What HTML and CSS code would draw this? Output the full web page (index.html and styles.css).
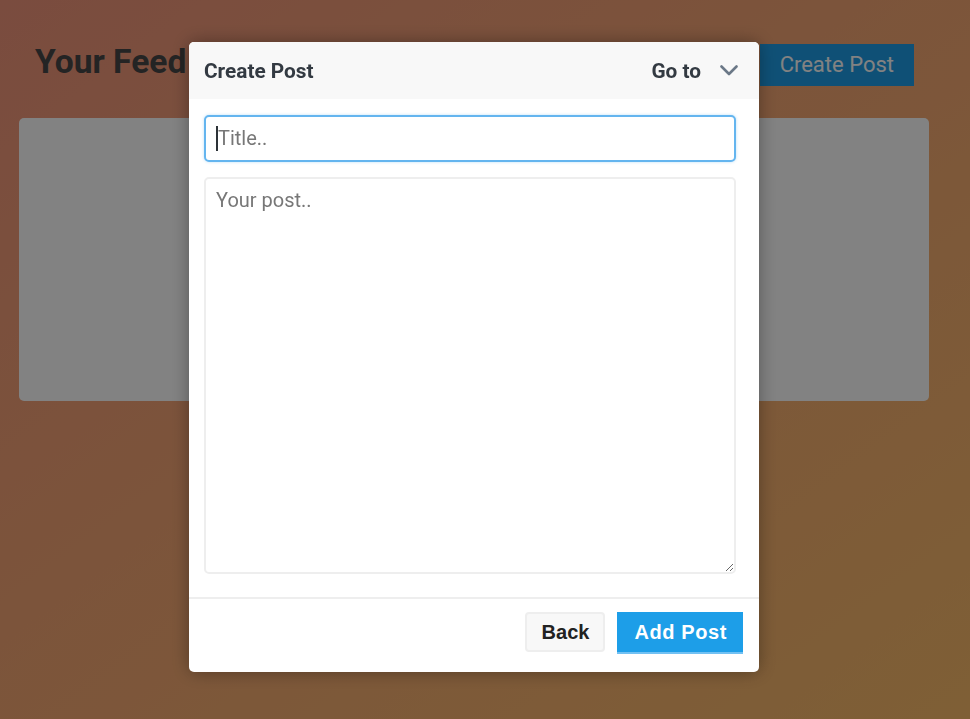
FILE: index.html
```html
<!DOCTYPE html>
<html lang="en">
<head>
<meta charset="utf-8">
<title>Your Feed</title>
<link rel="stylesheet" href="styles.css">
</head>
<body>
<div class="page">
  <header class="feed-header">
    <h1 class="feed-title">Your Feed</h1>
    <button class="create-btn">Create Post</button>
  </header>
  <section class="feed-card"></section>
</div>

<div class="overlay">
  <div class="modal">
    <div class="modal-header">
      <span class="modal-title">Create Post</span>
      <div class="goto">
        <span>Go to</span>
        <svg class="chevron" width="18" height="11" viewBox="0 0 18 11"><path d="M1.5 1.5 L9 9 L16.5 1.5" fill="none" stroke="#6b7887" stroke-width="2.6" stroke-linecap="round" stroke-linejoin="round"/></svg>
      </div>
    </div>
    <div class="modal-body">
      <div class="title-field">
        <input class="title-input" type="text" placeholder="Title.." autofocus>
      </div>
      <textarea class="post-input" placeholder="Your post.."></textarea>
    </div>
    <div class="modal-footer">
      <button class="btn-back">Back</button>
      <button class="btn-add">Add Post</button>
    </div>
  </div>
</div>
</body>
</html>
```
FILE: styles.css
```css
* { box-sizing: border-box; }
html, body { height: 100%; }
body {
  margin: 0;
  font-family: Roboto, "Liberation Sans", sans-serif;
  background: linear-gradient(to bottom right, #f0957c, #f9bb6a);
  min-height: 719px;
}
.page {
  padding: 44px 41px 0 19px;
}
.feed-header {
  display: flex;
  justify-content: space-between;
  align-items: flex-start;
  padding: 0 15px 0 16px;
}
.feed-title {
  margin: -1px 0 0;
  font-size: 33.6px;
  line-height: 38px;
  font-weight: 700;
  color: #484848;
}
.create-btn {
  font-family: Roboto, sans-serif;
  font-size: 22px;
  line-height: 26px;
  padding: 8px 20px;
  border: none;
  background: #1e9ee8;
  color: #fff;
}
.feed-card {
  margin-top: 32px;
  height: 283px;
  background: #fff;
  border-radius: 5px;
}
.overlay {
  position: fixed;
  inset: 0;
  background: rgba(0, 0, 0, 0.49);
}
.modal {
  position: absolute;
  top: 42px;
  left: 189px;
  width: 570px;
  background: #fff;
  border-radius: 5px;
  box-shadow: 0 0 18px rgba(0, 0, 0, 0.35);
  overflow: hidden;
}
.modal-header {
  height: 57px;
  background: #f8f8f8;
  display: flex;
  align-items: center;
  justify-content: space-between;
  padding: 0 21px 0 15px;
  color: #333a42;
  font-size: 20.8px;
  font-weight: 700;
}
.goto {
  display: flex;
  align-items: center;
}
.chevron {
  margin-left: 19px;
  display: block;
}
.modal-body {
  padding: 16px 23px 23px 15px;
}
.title-field {
  position: relative;
  width: 532px;
}
.title-field::after {
  content: "";
  position: absolute;
  left: 12px;
  top: 11px;
  width: 2px;
  height: 25px;
  background: #2d3338;
}
.title-input,
.post-input {
  display: block;
  width: 532px;
  font-family: Roboto, sans-serif;
  font-size: 20px;
  line-height: 23px;
  color: #333;
  border-radius: 5px;
  outline: none;
  background: #fff;
}
.title-input {
  padding: 10px 10px 10px 12px;
  border: 2px solid #64b5ef;
  box-shadow: 0 0 3px rgba(100, 181, 239, 0.45);
  caret-color: transparent;
}
.post-input {
  margin-top: 15px;
  height: 397px;
  padding: 10px 10px 8px;
  border: 2px solid #eeeeee;
  resize: vertical;
}
.title-input::placeholder,
.post-input::placeholder {
  color: #777;
}
.modal-footer {
  border-top: 2px solid #eeeeee;
  padding: 13px 16px 18px;
  display: flex;
  justify-content: flex-end;
  align-items: flex-start;
  gap: 12px;
}
.btn-back {
  font-family: "Liberation Sans", Arial, sans-serif;
  font-weight: 700;
  font-size: 20px;
  line-height: 22px;
  padding: 7px 14px 7px 15px;
  color: #222;
  background: #f8f8f8;
  border: 2px solid #eeeeee;
  border-radius: 4px;
}
.btn-add {
  font-family: "Liberation Sans", Arial, sans-serif;
  font-weight: 700;
  font-size: 20px;
  line-height: 22px;
  letter-spacing: 0.6px;
  padding: 9px 16px 9px 17px;
  color: #fff;
  background: #1d9ee8;
  border: none;
  border-bottom: 2px solid #72c1f3;
  border-radius: 0;
}
```
